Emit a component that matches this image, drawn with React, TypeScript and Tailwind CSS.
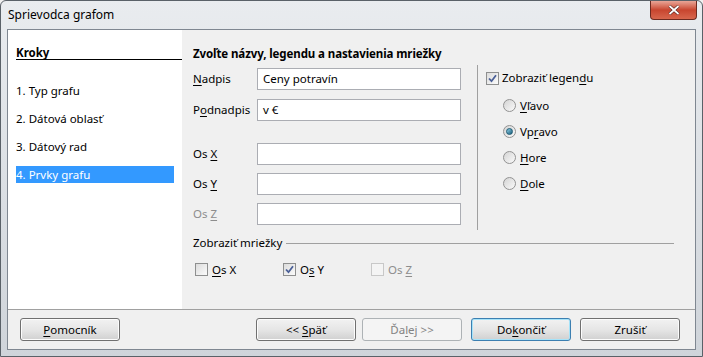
import React from 'react';

const font = { fontFamily: '"Noto Sans", "Open Sans", sans-serif' };

const U = ({ children }: { children: React.ReactNode }) => <span className="underline underline-offset-2">{children}</span>;

const Input = ({ value }: { value?: string }) => (
  <div className="h-[22px] w-[204px] border border-[#abadb3] bg-white px-[5px] text-[11.5px] leading-[20px] text-black">{value}</div>
);

const Check = ({ checked, disabled }: { checked?: boolean; disabled?: boolean }) => (
  <span
    className={`flex h-[13px] w-[13px] items-center justify-center border ${disabled ? 'border-[#c8c8c8] bg-[#f4f4f4]' : 'border-[#8e8f8f] bg-gradient-to-br from-[#dcdcdc] to-[#fbfbfb]'}`}
  >
    {checked && (
      <svg width="9" height="9" viewBox="0 0 9 9">
        <path d="M1 4.5 L3.5 7.2 L8 1.2" fill="none" stroke="#4a5f97" strokeWidth="1.8" />
      </svg>
    )}
  </span>
);

const Radio = ({ checked }: { checked?: boolean }) => (
  <span className="flex h-[13px] w-[13px] items-center justify-center rounded-full border border-[#929292] bg-gradient-to-br from-[#d4d4d4] to-[#fafafa]">
    {checked && <span className="h-[7px] w-[7px] rounded-full bg-gradient-to-br from-[#8fd1e9] to-[#155f7c] border border-[#1d5a73]" />}
  </span>
);

const Button = ({ children, variant }: { children: React.ReactNode; variant?: 'default' | 'disabled' }) => (
  <div
    className={`flex h-[23px] w-[100px] items-center justify-center rounded-[3px] border ${
      variant === 'disabled'
        ? 'border-[#adb2b5] bg-[#f4f4f4] text-[#838383]'
        : variant === 'default'
        ? 'border-[#3c7fb1] bg-gradient-to-b from-[#f2f2f2] via-[#e6e6e6] to-[#d0d0d0] text-black shadow-[inset_0_0_0_1px_#a6e3f9]'
        : 'border-[#707070] bg-gradient-to-b from-[#f2f2f2] via-[#e6e6e6] to-[#d0d0d0] text-black shadow-[inset_0_0_0_1px_#fcfcfc]'
    }`}
  >
    {children}
  </div>
);

export default function App() {
  return (
    <div style={font} className="h-[357px] w-[703px] overflow-hidden bg-[#f0f0f0]">
      <div className="flex h-full flex-col rounded-t-[6px] border border-[#5a6168] bg-gradient-to-b from-[#e9ecef] to-[#cfd4da]">
        {/* Title bar */}
        <div className="flex h-[28px] items-start justify-between">
          <span className="ml-[7px] mt-[5px] text-[12px] text-black">Sprievodca grafom</span>
          <div className="mr-[5px] flex h-[19px] w-[47px] items-center justify-center rounded-b-[4px] border border-t-0 border-[#6d2a20] bg-gradient-to-b from-[#e8a597] via-[#c8452f] to-[#d8664d]">
            <svg width="12" height="10" viewBox="0 0 12 10">
              <path d="M1.5 1 L10.5 9 M10.5 1 L1.5 9" stroke="#3a1410" strokeWidth="3" />
              <path d="M1.5 1 L10.5 9 M10.5 1 L1.5 9" stroke="#ffffff" strokeWidth="1.8" />
            </svg>
          </div>
        </div>

        {/* Client */}
        <div className="mx-[6px] mb-[6px] flex flex-1 flex-col border border-[#7f8791] bg-[#f0f0f0] text-[11.5px] text-black">
          <div className="flex h-[279px]">
            {/* Steps */}
            <div className="w-[174px] bg-white pl-[8px]">
              <div className="mt-[16px] border-b border-black font-bold leading-[13px]">Kroky</div>
              <div className="mt-[22px] flex flex-col gap-[11px] pr-[8px]">
                <div className="h-[17px] leading-[17px]">1. Typ grafu</div>
                <div className="h-[17px] leading-[17px]">2. Dátová oblasť</div>
                <div className="h-[17px] leading-[17px]">3. Dátový rad</div>
                <div className="h-[17px] bg-[#3399ff] leading-[17px] text-white">4. Prvky grafu</div>
              </div>
            </div>

            {/* Content */}
            <div className="flex-1 pl-[11px] pr-[21px]">
              <div className="mt-[16px] font-bold leading-[16px] tracking-[-0.1px]">Zvoľte názvy, legendu a nastavienia mriežky</div>
              <div className="mt-[6px] flex">
                <div className="flex w-[284px] flex-col">
                  <div className="flex h-[22px] items-center">
                    <span className="w-[64px]"><U>N</U>adpis</span>
                    <Input value="Ceny potravín" />
                  </div>
                  <div className="mt-[9px] flex h-[22px] items-center">
                    <span className="w-[64px]">P<U>o</U>dnadpis</span>
                    <Input value="v €" />
                  </div>
                  <div className="mt-[22px] flex h-[22px] items-center">
                    <span className="w-[64px]">Os <U>X</U></span>
                    <Input />
                  </div>
                  <div className="mt-[8px] flex h-[22px] items-center">
                    <span className="w-[64px]">Os <U>Y</U></span>
                    <Input />
                  </div>
                  <div className="mt-[8px] flex h-[22px] items-center">
                    <span className="w-[64px] text-[#8d8d8d]">Os <U>Z</U></span>
                    <Input />
                  </div>
                </div>
                <div className="mb-[-5px] mt-[-3px] w-[1px] bg-[#a0a0a0]" />
                <div className="ml-[8px] flex flex-col">
                  <div className="flex h-[20px] items-center gap-[3px]">
                    <Check checked />
                    <span>Zobraziť legen<U>d</U>u</span>
                  </div>
                  <div className="ml-[17px] mt-[9px] flex flex-col gap-[9px]">
                    <div className="flex h-[17px] items-center gap-[4px]"><Radio /><span><U>V</U>ľavo</span></div>
                    <div className="flex h-[17px] items-center gap-[4px]"><Radio checked /><span>Vp<U>r</U>avo</span></div>
                    <div className="flex h-[17px] items-center gap-[4px]"><Radio /><span><U>H</U>ore</span></div>
                    <div className="flex h-[17px] items-center gap-[4px]"><Radio /><span><U>D</U>ole</span></div>
                  </div>
                </div>
              </div>

              <div className="mt-[10px] flex items-center gap-[4px]">
                <span className="leading-[16px]">Zobraziť mriežky</span>
                <div className="h-[1px] flex-1 bg-[#a0a0a0]" />
              </div>
              <div className="mt-[10px] flex items-center pl-[2px]">
                <div className="flex w-[88px] items-center gap-[4px]"><Check /><span><U>O</U>s X</span></div>
                <div className="flex w-[88px] items-center gap-[4px]"><Check checked /><span>O<U>s</U> Y</span></div>
                <div className="flex items-center gap-[4px] text-[#8d8d8d]"><Check disabled /><span>Os <U>Z</U></span></div>
              </div>
            </div>
          </div>

          {/* Buttons */}
          <div className="flex flex-1 items-start border-t border-[#a0a0a0] pl-[12px] pt-[8px]">
            <Button><span><U>P</U>omocník</span></Button>
            <div className="ml-[136px] flex gap-[6px]">
              <Button><span>&lt;&lt; <U>S</U>päť</span></Button>
              <Button variant="disabled"><span>Ďa<U>l</U>ej &gt;&gt;</span></Button>
              <div className="ml-[3px] flex gap-[9px]">
                <Button variant="default"><span>Do<U>k</U>ončiť</span></Button>
                <Button>Zrušiť</Button>
              </div>
            </div>
          </div>
        </div>
      </div>
    </div>
  );
}
